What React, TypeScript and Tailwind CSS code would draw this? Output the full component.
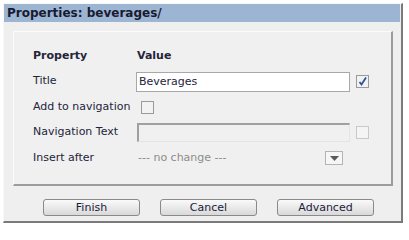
import { useState } from 'react';

const font = { fontFamily: '"DejaVu Sans", Verdana, sans-serif' };

const Check = ({ checked = false, disabled = false }: { checked?: boolean; disabled?: boolean }) => (
  <span
    className={`flex items-center justify-center w-[13px] h-[13px] border ${
      disabled ? 'border-[#c8c8c8] bg-[#f4f4f4]' : 'border-[#9a9a9a] bg-[#f2f2f2]'
    }`}
  >
    {checked && (
      <svg width="11" height="11" viewBox="0 0 11 11">
        <path d="M2.5 6 L4.5 8.5 L9 1.5" fill="none" stroke="#2d4f9a" strokeWidth="1.8" />
      </svg>
    )}
  </span>
);

const Button = ({ label }: { label: string }) => (
  <button className="w-[97px] h-[17px] rounded-[3px] border border-[#8a8a8a] bg-gradient-to-b from-[#fafafa] to-[#d9d9d9] text-[11px] leading-[15px] text-[#1b1b3a]">
    {label}
  </button>
);

export default function App() {
  const [title, setTitle] = useState('Beverages');

  return (
    <div className="w-[409px] h-[230px] bg-white pt-[3px] pl-[3px]" style={font}>
      <div className="w-[400px] h-[220px] bg-[#efefef] border-t border-l border-[#f8f8f8] border-r-2 border-b-2 border-r-[#7a7a7a] border-b-[#7a7a7a] flex flex-col">
        <div className="h-[18px] mr-[1px] bg-[#9bb5d3] pl-[3px] text-[12px] font-bold leading-[18px] text-[#1a1a30]">
          Properties: beverages/
        </div>
        <div className="ml-[9px] mt-[9px] w-[380px] h-[155px] bg-[#f0f0f0] border-t border-l border-[#fbfbfb] border-r-2 border-b-2 border-r-[#9c9c9c] border-b-[#9c9c9c] pt-[11px] pl-[19px] text-[11px] text-[#24243a]">
          <div className="flex items-center h-[26px] font-bold">
            <span className="w-[104px]">Property</span>
            <span>Value</span>
          </div>
          <div className="flex items-center h-[25px]">
            <span className="w-[103px]">Title</span>
            <input
              className="w-[214px] h-[20px] border border-[#a8a8a8] bg-white px-[2px] text-[11px] text-[#24243a] outline-none"
              value={title}
              onChange={(e) => setTitle(e.target.value)}
            />
            <span className="ml-[6px]">
              <Check checked />
            </span>
          </div>
          <div className="flex items-center h-[26px]">
            <span className="w-[108px]">Add to navigation</span>
            <Check />
          </div>
          <div className="flex items-center h-[25px]">
            <span className="w-[104px]">Navigation Text</span>
            <input
              disabled
              className="w-[213px] h-[19px] border-t-2 border-l-2 border-r border-b border-t-[#a0a0a0] border-l-[#a0a0a0] border-r-[#e4e4e4] border-b-[#e4e4e4] bg-[#f0f0f0]"
            />
            <span className="ml-[6px]">
              <Check disabled />
            </span>
          </div>
          <div className="flex items-center h-[26px]">
            <span className="w-[105px]">Insert after</span>
            <span className="w-[187px] text-[#8c8c8c]">--- no change ---</span>
            <span className="flex items-center justify-center w-[18px] h-[14px] border border-[#b4b4b4] bg-[#f6f6f6]">
              <svg width="9" height="5" viewBox="0 0 9 5">
                <path d="M0 0 H9 L4.5 5 Z" fill="#5a5a5a" />
              </svg>
            </span>
          </div>
        </div>
        <div className="flex gap-[20px] pl-[39px] mt-[13px]">
          <Button label="Finish" />
          <Button label="Cancel" />
          <Button label="Advanced" />
        </div>
      </div>
    </div>
  );
}
